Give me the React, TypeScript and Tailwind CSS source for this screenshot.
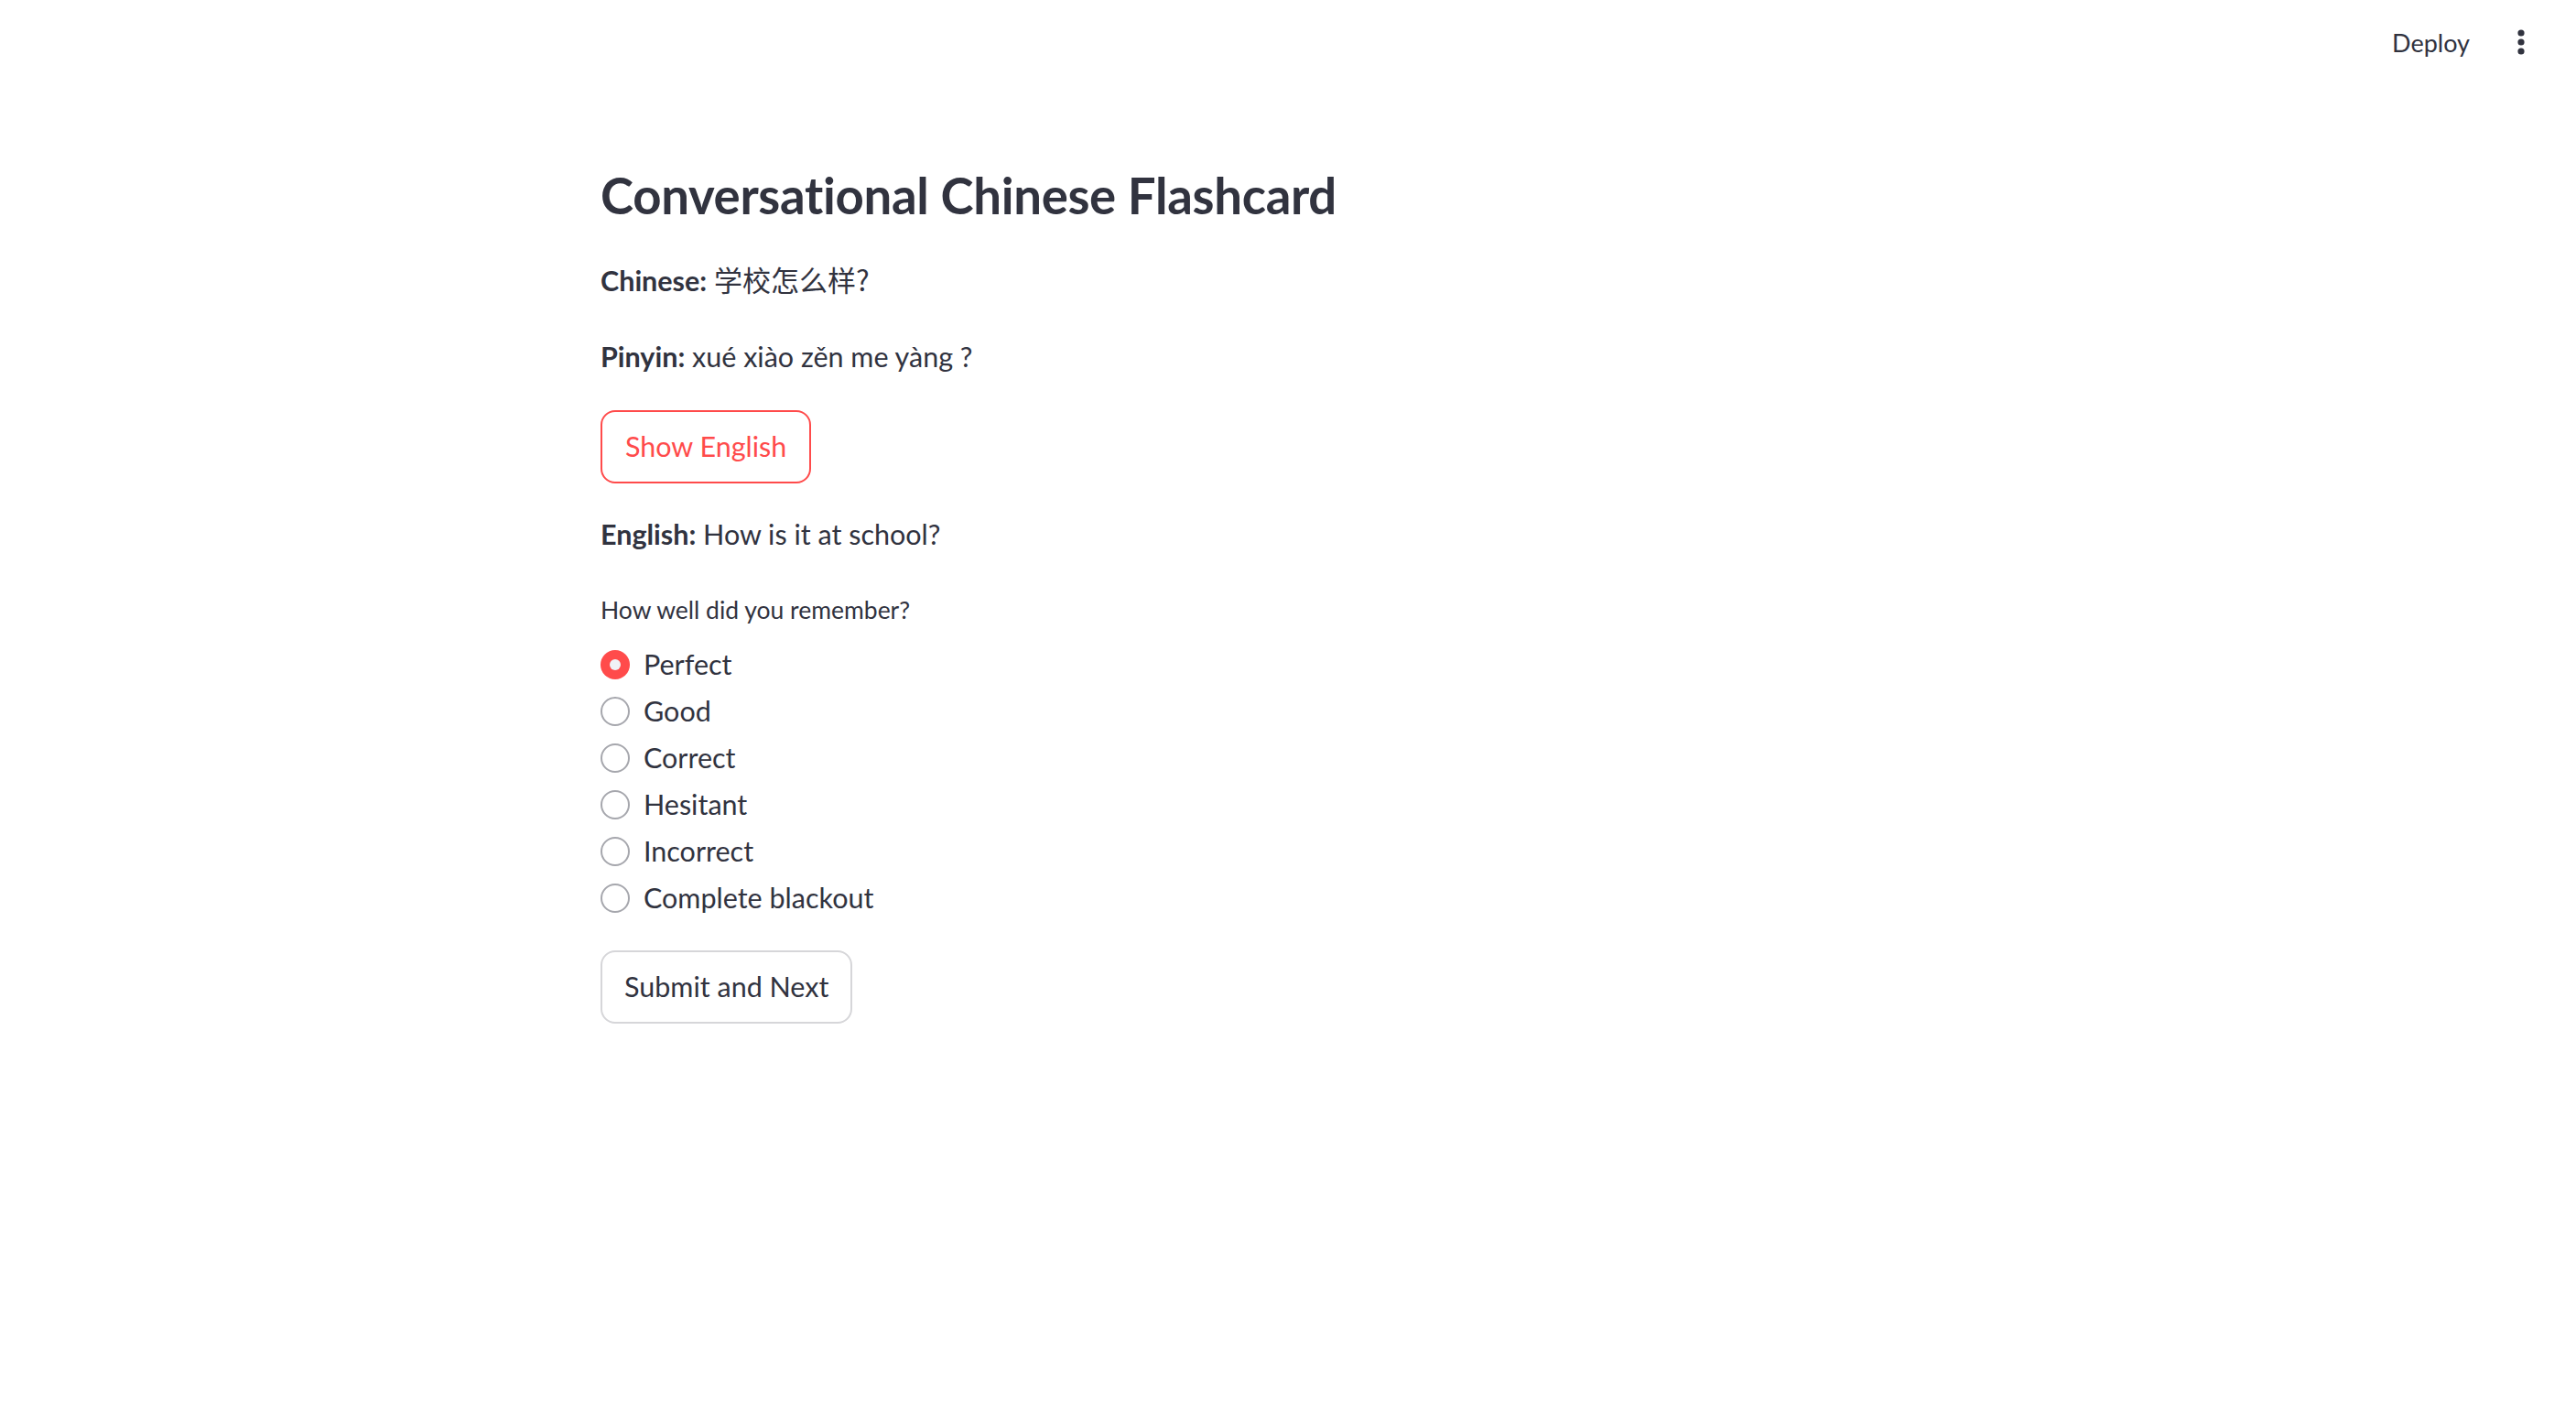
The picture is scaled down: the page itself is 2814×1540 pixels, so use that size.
import React, { useState } from 'react';

const options = ['Perfect', 'Good', 'Correct', 'Hesitant', 'Incorrect', 'Complete blackout'];

function Radio({ checked }: { checked: boolean }) {
  if (checked) {
    return (
      <span className="flex h-[32px] w-[32px] shrink-0 items-center justify-center rounded-full bg-[#ff4b4b]">
        <span className="h-[12px] w-[12px] rounded-full bg-[#f0f2f6]" />
      </span>
    );
  }
  return <span className="h-[32px] w-[32px] shrink-0 rounded-full border-2 border-[#a6a7ad] bg-white" />;
}

export default function App() {
  const [choice, setChoice] = useState('Perfect');
  const [showEnglish, setShowEnglish] = useState(true);

  return (
    <div className="min-h-screen bg-white text-[#31333f] font-['Lato','Noto_Sans_CJK_SC',sans-serif]">
      {/* Header */}
      <header className="flex h-[92px] items-center justify-end pr-[40px]">
        <span className="text-[27px] leading-none">Deploy</span>
        <button className="ml-[36px] flex h-[40px] w-[40px] items-center justify-center">
          <svg width="8" height="28" viewBox="0 0 8 28" fill="#31333f">
            <circle cx="4" cy="4" r="3.6" />
            <circle cx="4" cy="14" r="3.6" />
            <circle cx="4" cy="24" r="3.6" />
          </svg>
        </button>
      </header>

      {/* Main block */}
      <main className="mx-auto w-[1502px]">
        <h1 className="mt-[86px] text-[54.5px] font-bold leading-[70px] tracking-[-0.3px]">
          Conversational Chinese Flashcard
        </h1>

        <p className="mt-[34px] h-[48px] overflow-visible text-[30.5px] leading-[48px]">
          <strong className="font-bold">Chinese:</strong>{' '}
          <span className="font-['Noto_Sans_CJK_SC',sans-serif] text-[31px] leading-none">学校怎么样?</span>
        </p>

        <p className="mt-[35px] text-[30.5px] leading-[48px]">
          <strong className="font-bold">Pinyin:</strong> xué xiào zěn me yàng ?
        </p>

        <button
          onClick={() => setShowEnglish(!showEnglish)}
          className="mt-[35px] flex h-[80px] items-center rounded-[16px] border-2 border-[#ff4b4b] bg-white px-[25px] text-[30.5px] text-[#ff4b4b]"
        >
          Show English
        </button>

        {showEnglish && (
          <p className="mt-[31px] text-[30.5px] leading-[48px]">
            <strong className="font-bold">English:</strong> How is it at school?
          </p>
        )}

        <div className="mt-[39px] text-[26.5px] leading-[40px]">How well did you remember?</div>

        <div className="mt-[14px] flex flex-col">
          {options.map((o) => (
            <label
              key={o}
              onClick={() => setChoice(o)}
              className="flex h-[51px] cursor-pointer items-center gap-[15px] text-[30.5px]"
            >
              <Radio checked={choice === o} />
              <span>{o}</span>
            </label>
          ))}
        </div>

        <button className="mt-[32px] flex h-[80px] items-center rounded-[16px] border-2 border-[#d6d6d9] bg-white px-[24px] text-[30.5px] text-[#31333f]">
          Submit and Next
        </button>
      </main>
    </div>
  );
}
